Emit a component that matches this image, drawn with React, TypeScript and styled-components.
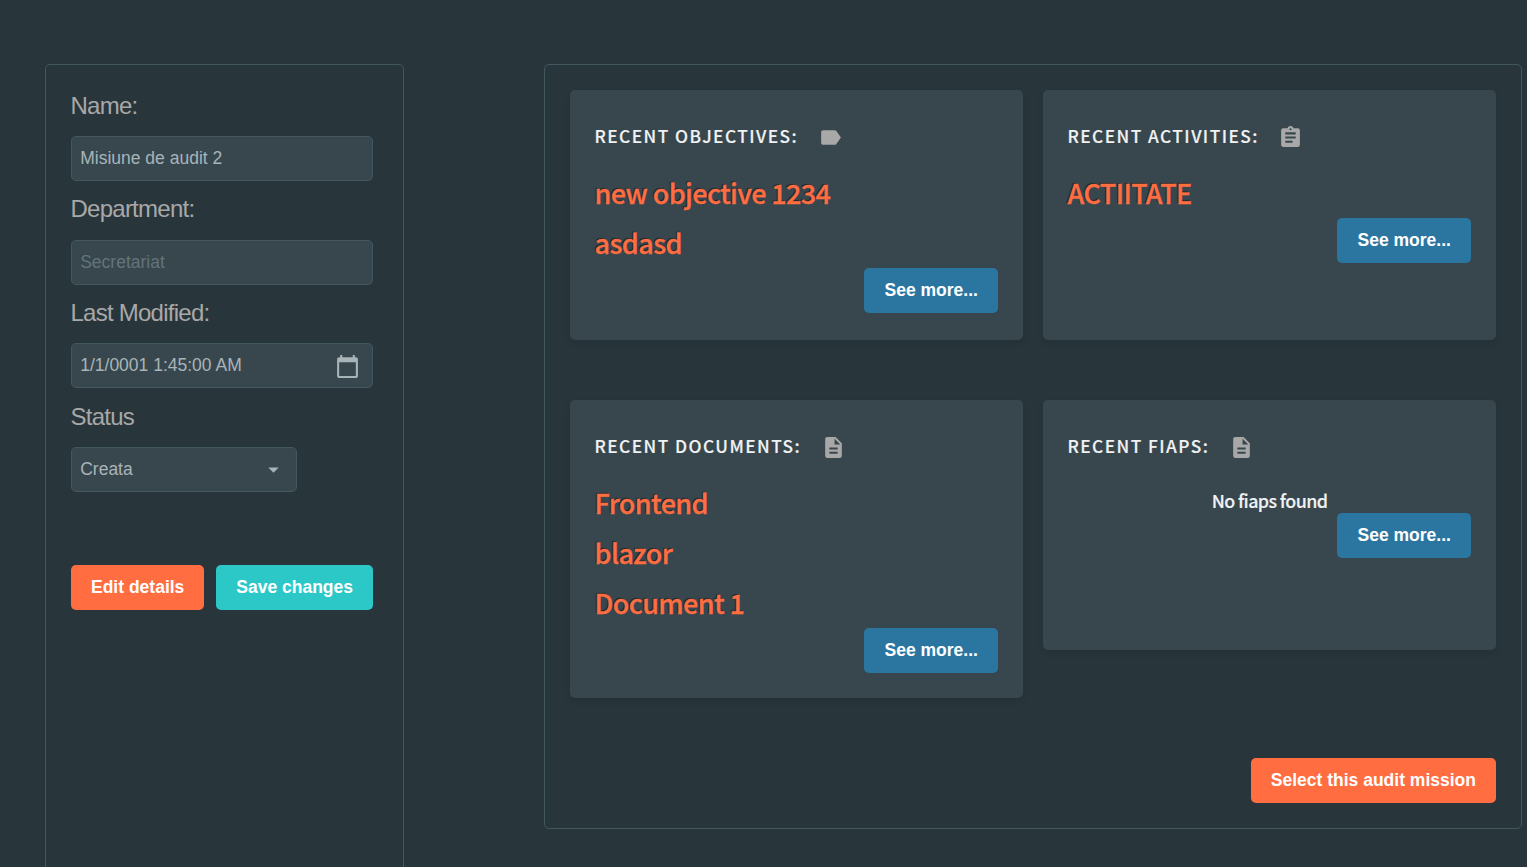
import React from "react";
import styled, { createGlobalStyle } from "styled-components";
import {
  MdArrowDropDown,
  MdAssignment,
  MdCalendarToday,
  MdDescription,
  MdLabel,
} from "react-icons/md";

const GlobalStyle = createGlobalStyle`
  * { box-sizing: border-box; }
  body {
    margin: 0;
    background: #28363c;
    font-family: "Liberation Sans", Arial, sans-serif;
    font-size: 17.5px;
    overflow: hidden;
  }
`;

const headingFont = `"Noto Sans CJK SC", "Noto Sans", sans-serif`;

const Page = styled.main`
  display: flex;
  align-items: flex-start;
  height: 867px;
  overflow: hidden;
  padding: 64px 5px 0 45px;
`;

const Panel = styled.section`
  border: 1px solid #435760;
  border-radius: 5px;
  padding: 25px;
`;

const DetailsPanel = styled(Panel)`
  width: 359px;
  height: 900px;
  flex: none;
  margin-right: 140px;
  padding-right: 30px;
`;

const Overview = styled(Panel)`
  flex: 1;
  display: flex;
  flex-direction: column;
  align-items: flex-end;
  gap: 60px;
`;

const Field = styled.div`
  height: 103.6px;
`;

const Label = styled.div`
  height: 46px;
  padding-top: 0.8px;
  margin-left: -0.5px;
  line-height: 30px;
  font-size: 24px;
  letter-spacing: -0.75px;
  color: #a8a8a8;
`;

const Control = styled.div<{ $width?: number; $muted?: boolean }>`
  display: flex;
  align-items: center;
  justify-content: space-between;
  width: ${(p) => (p.$width ? `${p.$width}px` : "100%")};
  height: 45px;
  padding: 0 11px 0 8.2px;
  border: 1px solid #435760;
  border-radius: 5px;
  background: #38474e;
  color: ${(p) => (p.$muted ? "#62747b" : "#a8b4b8")};
`;

const CalendarIcon = styled(MdCalendarToday)`
  margin: 2px 1px 0 0;
`;

const CaretIcon = styled(MdArrowDropDown)`
  margin-right: -1px;
`;

const Button = styled.button<{ $tone: string }>`
  height: 45px;
  padding: 0 20px;
  border: 0;
  border-radius: 5px;
  background: ${(p) => p.$tone};
  color: #fff;
  font: bold 17.5px "Liberation Sans", Arial, sans-serif;
  white-space: nowrap;
`;

const Actions = styled.div`
  display: flex;
  justify-content: space-between;
  margin-top: 60.6px;
`;

const CardGrid = styled.div`
  width: 100%;
  display: grid;
  grid-template-columns: 1fr 1fr;
  align-items: start;
  gap: 60px 20px;
`;

const Card = styled.article`
  display: flex;
  flex-direction: column;
  align-items: flex-start;
  min-height: 250px;
  padding: 25px;
  border-radius: 5px;
  background: #38474e;
  box-shadow: 0 3px 6px rgba(0, 0, 0, 0.1);
`;

const CardTitle = styled.h2`
  display: flex;
  align-items: center;
  gap: 19.5px;
  height: 41px;
  margin: 0 0 12px -0.5px;
  font: 500 17.3px/41px ${headingFont};
  letter-spacing: 1.45px;
  color: #f0f2f3;
  -webkit-text-stroke: 0.15px #f0f2f3;
  text-transform: uppercase;
  white-space: nowrap;
  svg {
    margin-top: 4px;
    color: #a8a8a8;
    stroke-width: 0;
  }
`;

const Item = styled.div`
  height: 50px;
  margin-left: -0.4px;
  font: 500 26.9px/50px ${headingFont};
  letter-spacing: -0.56px;
  color: #ff6d41;
  -webkit-text-stroke: 0.35px #ff6d41;
  text-shadow: -1px -1px 1px rgba(0, 0, 0, 0.5);
`;

const Empty = styled.div`
  align-self: center;
  height: 35px;
  font: 500 17.9px/44px ${headingFont};
  letter-spacing: -0.6px;
  color: #f0f2f3;
  -webkit-text-stroke: 0.15px #f0f2f3;
`;

const MoreButton = styled(Button)`
  align-self: flex-end;
  min-width: 133.6px;
`;

const ORANGE = "#ff6d41";
const TEAL = "#2cc8c8";
const BLUE = "#2b76a0";

const cards = [
  { title: "Recent objectives:", Icon: MdLabel, items: ["new objective 1234", "asdasd"] },
  { title: "Recent activities:", Icon: MdAssignment, items: ["ACTIITATE"] },
  { title: "Recent documents:", Icon: MdDescription, items: ["Frontend", "blazor", "Document 1"] },
  { title: "Recent fiaps:", Icon: MdDescription, items: [], empty: "No fiaps found" },
];

export default function App() {
  return (
    <>
      <GlobalStyle />
      <Page>
        <DetailsPanel>
          <Field>
            <Label>Name:</Label>
            <Control>Misiune de audit 2</Control>
          </Field>
          <Field>
            <Label>Department:</Label>
            <Control $muted>Secretariat</Control>
          </Field>
          <Field>
            <Label>Last Modified:</Label>
            <Control>
              1/1/0001 1:45:00 AM
              <CalendarIcon size={25} />
            </Control>
          </Field>
          <Field>
            <Label>Status</Label>
            <Control $width={226}>
              Creata
              <CaretIcon size={25} />
            </Control>
          </Field>
          <Actions>
            <Button $tone={ORANGE}>Edit details</Button>
            <Button $tone={TEAL}>Save changes</Button>
          </Actions>
        </DetailsPanel>
        <Overview>
          <CardGrid>
            {cards.map(({ title, Icon, items, empty }) => (
              <Card key={title}>
                <CardTitle>
                  {title}
                  <Icon size={25} />
                </CardTitle>
                {items.map((item) => (
                  <Item key={item}>{item}</Item>
                ))}
                {empty && <Empty>{empty}</Empty>}
                <MoreButton $tone={BLUE}>See more...</MoreButton>
              </Card>
            ))}
          </CardGrid>
          <Button $tone={ORANGE}>Select this audit mission</Button>
        </Overview>
      </Page>
    </>
  );
}
